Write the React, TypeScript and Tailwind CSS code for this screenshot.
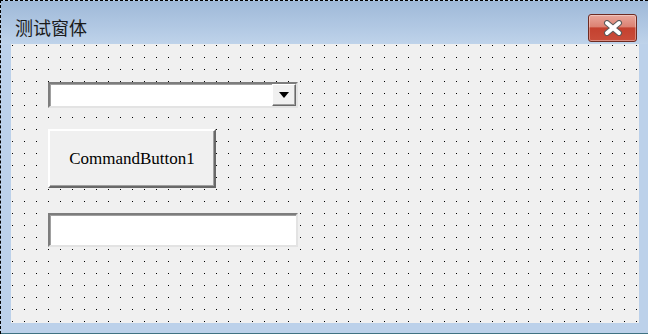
import React from "react";

function CloseGlyph() {
  return (
    <svg width="20" height="16" viewBox="0 0 20 16">
      <path d="M4 3 L16 13 M16 3 L4 13" stroke="#5a5a5a" strokeWidth="6" strokeLinecap="round" />
      <path d="M4 3 L16 13 M16 3 L4 13" stroke="#ffffff" strokeWidth="4" strokeLinecap="round" />
    </svg>
  );
}

export default function App() {
  return (
    <div className="w-[648px] h-[334px] flex flex-col border-l border-t border-dashed border-black bg-[#bcd1ea] overflow-hidden">
      {/* Title bar */}
      <div className="h-[43px] flex justify-between bg-[linear-gradient(to_bottom,#9fb9d8,#b1c8e3_60%,#bfd3ea)]">
        <span className="pl-[14px] pt-[17px] text-[18px] leading-none text-[#1a1a1a] font-['Noto_Sans_CJK_SC',sans-serif]">
          测试窗体
        </span>
        <div className="mt-[13px] mr-[11px] w-[49px] h-[28px] rounded-[3px] border border-[#6e2b22] bg-[linear-gradient(to_bottom,#e9a79c,#dc8273_45%,#c4412f_50%,#c94d3a)] flex items-center justify-center shadow-[inset_0_0_0_1px_rgba(255,255,255,0.35)]">
          <CloseGlyph />
        </div>
      </div>

      {/* Client area */}
      <div className="flex-1 pl-[10px] pr-[9px] pb-[10px] border-b border-[#3f7282]">
        <div className="h-full bg-[#f0f0f0] bg-[conic-gradient(from_270deg_at_1px_1px,#000_90deg,transparent_0)] bg-size-[12px_12px] bg-position-[1px_1px] pl-[37px] pt-[38px] flex flex-col items-start">
          {/* Combo box */}
          <div className="w-[250px] h-[26px] bg-white border-2 border-t-[#7d7d7d] border-l-[#7d7d7d] border-r-[#e3e3e3] border-b-[#e3e3e3] shadow-[inset_1px_1px_0_#a0a0a0] flex justify-end">
            <div className="w-[24px] h-full bg-[#f0f0f0] border border-t-[#ffffff] border-l-[#ffffff] border-r-[#696969] border-b-[#696969] shadow-[inset_-1px_-1px_0_#a0a0a0] flex items-center justify-center">
              <svg width="10" height="6" viewBox="0 0 10 6">
                <path d="M0 0 H10 L5 6 Z" fill="#000" />
              </svg>
            </div>
          </div>

          {/* Command button */}
          <div className="mt-[21px] w-[168px] h-[59px] bg-[#f0f0f0] border-2 border-t-white border-l-white border-r-[#696969] border-b-[#696969] shadow-[inset_-1px_-1px_0_#a0a0a0] flex items-center justify-center">
            <span className="text-[17px] text-black font-['Liberation_Serif',serif]">
              CommandButton1
            </span>
          </div>

          {/* Text box */}
          <div className="mt-[25px] w-[250px] h-[34px] bg-white border-2 border-t-[#7d7d7d] border-l-[#7d7d7d] border-r-[#e3e3e3] border-b-[#e3e3e3] shadow-[inset_1px_1px_0_#a0a0a0]" />
        </div>
      </div>
    </div>
  );
}
